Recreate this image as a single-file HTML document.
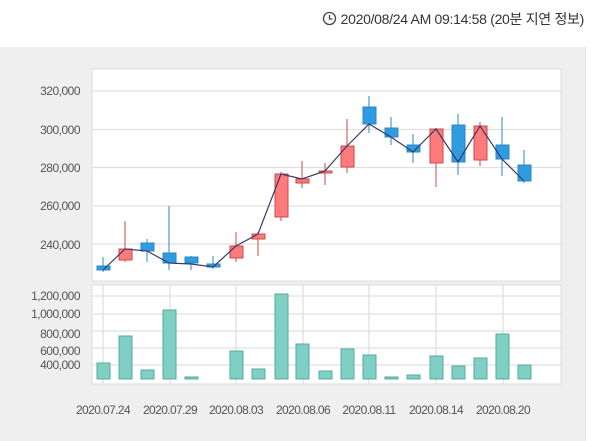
<!DOCTYPE html>
<html><head><meta charset="utf-8"><style>
body{margin:0;width:600px;height:441px;background:#fff;overflow:hidden;font-family:"Liberation Sans","Noto Sans CJK KR",sans-serif;position:relative}
.hdr{position:absolute;right:16px;top:9px;font-size:14px;color:#333;letter-spacing:-0.3px}
.panel{position:absolute;left:0;top:47px;width:585px;height:394px;background:#efefef;border-right:1px solid #e2e2e2}
</style></head><body>
<div class="hdr"><svg width="15" height="15" viewBox="0 0 15 15" style="vertical-align:-2px"><circle cx="7.5" cy="7.5" r="6" fill="none" stroke="#444" stroke-width="1.3"/><path d="M7.5 4v4h3" fill="none" stroke="#444" stroke-width="1.3"/></svg> 2020/08/24 AM 09:14:58 (20분 지연 정보)</div>
<div class="panel"></div>
<svg width="600" height="441" style="position:absolute;left:0;top:0" font-family="Liberation Sans, sans-serif">
<rect x="92" y="69" width="469" height="212" fill="#fff" stroke="#dcdcdc"/>
<rect x="92" y="285" width="469" height="99" fill="#fff" stroke="#dcdcdc"/>
<g stroke="#e0e0e0" stroke-width="1.3">
<line x1="92" x2="561" y1="91" y2="91"/><line x1="92" x2="561" y1="129.5" y2="129.5"/><line x1="92" x2="561" y1="167.5" y2="167.5"/><line x1="92" x2="561" y1="206" y2="206"/><line x1="92" x2="561" y1="244" y2="244"/>
<line x1="92" x2="561" y1="296" y2="296"/><line x1="92" x2="561" y1="314" y2="314"/><line x1="92" x2="561" y1="331" y2="331"/><line x1="92" x2="561" y1="348" y2="348"/><line x1="92" x2="561" y1="365" y2="365"/>
<line x1="103" x2="103" y1="285" y2="384"/><line x1="170" x2="170" y1="285" y2="384"/><line x1="236" x2="236" y1="285" y2="384"/><line x1="303" x2="303" y1="285" y2="384"/><line x1="369" x2="369" y1="285" y2="384"/><line x1="436" x2="436" y1="285" y2="384"/><line x1="503" x2="503" y1="285" y2="384"/>
</g>
<g font-size="12" fill="#555" text-anchor="end" letter-spacing="-0.5">
<text x="80" y="95">320,000</text><text x="80" y="134">300,000</text><text x="80" y="172">280,000</text><text x="80" y="210">260,000</text><text x="80" y="249">240,000</text>
<text x="80" y="300">1,200,000</text><text x="80" y="318">1,000,000</text><text x="80" y="338">800,000</text><text x="80" y="355">600,000</text><text x="80" y="369">400,000</text>
</g>
<g font-size="12" fill="#555" text-anchor="middle" letter-spacing="-0.6">
<text x="103" y="414">2020.07.24</text><text x="170" y="414">2020.07.29</text><text x="236" y="414">2020.08.03</text><text x="303" y="414">2020.08.06</text><text x="369" y="414">2020.08.11</text><text x="436" y="414">2020.08.14</text><text x="503" y="414">2020.08.20</text>
</g>
<g fill="#7fcfc4" stroke="#5aa89d">
<rect x="97" y="363" width="13" height="16"/><rect x="119" y="336" width="13" height="43"/><rect x="141" y="370" width="13" height="9"/><rect x="163" y="310" width="13" height="69"/><rect x="185" y="377" width="13" height="2"/>
<rect x="230" y="351" width="13" height="28"/><rect x="252" y="369" width="13" height="10"/><rect x="275" y="294" width="13" height="85"/><rect x="296" y="344" width="13" height="35"/><rect x="319" y="371" width="13" height="8"/>
<rect x="341" y="349" width="13" height="30"/><rect x="363" y="355" width="13" height="24"/><rect x="385" y="377" width="13" height="2"/><rect x="407" y="375" width="13" height="4"/><rect x="430" y="356" width="13" height="23"/>
<rect x="452" y="366" width="13" height="13"/><rect x="474" y="358" width="13" height="21"/><rect x="496" y="334" width="13" height="45"/><rect x="518" y="365" width="13" height="14"/>
</g>
<g stroke-width="1">
<!-- blue -->
<g stroke="#2d87c3" fill="#2f9be0">
<line x1="103" x2="103" y1="257" y2="272"/><rect x="97" y="266" width="13" height="4"/>
<line x1="147" x2="147" y1="239" y2="262"/><rect x="141" y="243" width="13" height="8"/>
<line x1="169" x2="169" y1="206" y2="270"/><rect x="163" y="253" width="13" height="10"/>
<line x1="191" x2="191" y1="256" y2="270"/><rect x="185" y="257" width="13" height="6"/>
<line x1="213" x2="213" y1="256" y2="269"/><rect x="207" y="264" width="13" height="3"/>
<line x1="369" x2="369" y1="96" y2="133"/><rect x="363" y="107" width="13" height="17"/>
<line x1="391" x2="391" y1="117" y2="145"/><rect x="385" y="128" width="13" height="9"/>
<line x1="413" x2="413" y1="134" y2="163"/><rect x="407" y="145" width="13" height="7"/>
<line x1="458" x2="458" y1="114" y2="175"/><rect x="452" y="125" width="13" height="37"/>
<line x1="502" x2="502" y1="117" y2="176"/><rect x="496" y="145" width="13" height="14"/>
<line x1="524" x2="524" y1="150" y2="183"/><rect x="518" y="165" width="13" height="16"/>
</g>
<g stroke="#c84a4a" fill="#ff7b7b">
<line x1="125" x2="125" y1="221" y2="262"/><rect x="119" y="249" width="13" height="11"/>
<line x1="236" x2="236" y1="232" y2="262"/><rect x="230" y="246" width="13" height="12"/>
<line x1="258" x2="258" y1="232" y2="256"/><rect x="252" y="234" width="13" height="5"/>
<line x1="281" x2="281" y1="172" y2="221"/><rect x="275" y="174" width="13" height="43"/>
<line x1="302" x2="302" y1="161" y2="188"/><rect x="296" y="179" width="13" height="4"/>
<line x1="325" x2="325" y1="163" y2="185"/><rect x="319" y="171" width="13" height="2"/>
<line x1="347" x2="347" y1="119" y2="173"/><rect x="341" y="146" width="13" height="21"/>
<line x1="436" x2="436" y1="128" y2="187"/><rect x="430" y="129" width="13" height="34"/>
<line x1="480" x2="480" y1="122" y2="166"/><rect x="474" y="126" width="13" height="34"/>
</g>
</g>
<polyline fill="none" stroke="#3a3a6a" stroke-width="1.2" points="103,270 125,249 147,251 169,263 191,264 213,267 236,246 258,234 281,174 302,179 325,171 347,146 369,124 391,137 413,152 436,129 458,162 480,126 502,159 524,181"/>
</svg>
</body></html>
